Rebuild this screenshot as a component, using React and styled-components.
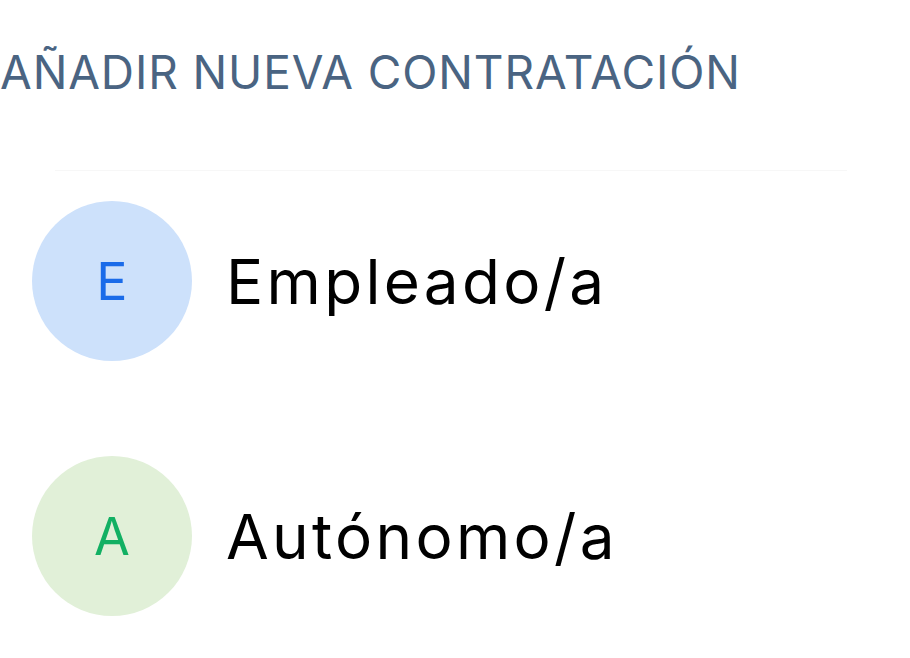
import React from "react";
import styled, { createGlobalStyle } from "styled-components";

const GlobalStyle = createGlobalStyle`
  html, body {
    margin: 0;
    padding: 0;
    background: #ffffff;
  }
  body {
    font-family: "Inter", "Noto Sans", sans-serif;
  }
`;

const Page = styled.div`
  width: 910px;
  height: 658px;
  overflow: hidden;
  display: flex;
  flex-direction: column;
`;

const Title = styled.h1`
  margin: 0;
  padding-top: 44px;
  font-size: 46px;
  font-weight: 400;
  line-height: 56px;
  letter-spacing: 0.9px;
  color: #4a6482;
  white-space: nowrap;
`;

const List = styled.ul`
  list-style: none;
  margin: 70px 63px 0 55px;
  padding: 30px 0 0 0;
  border-top: 1px solid #f7f7f7;
  display: flex;
  flex-direction: column;
  gap: 95px;
`;

const Item = styled.li`
  display: flex;
  align-items: center;
  gap: 34px;
  margin-left: -23px;
`;

const Avatar = styled.div`
  width: 160px;
  height: 160px;
  border-radius: 50%;
  flex-shrink: 0;
  display: flex;
  align-items: center;
  justify-content: center;
  background: ${(props) => props.bg};
  color: ${(props) => props.fg};
  font-size: 52px;
  font-weight: 400;
`;

const Label = styled.span`
  font-size: 62px;
  font-weight: 400;
  letter-spacing: 3.3px;
  color: #000000;
`;

const options = [
  { letter: "E", label: "Empleado/a", bg: "#cde1fb", fg: "#1a6be9" },
  { letter: "A", label: "Autónomo/a", bg: "#e1f0d8", fg: "#12b063" },
];

export default function App() {
  return (
    <Page>
      <GlobalStyle />
      <Title>AÑADIR NUEVA CONTRATACIÓN</Title>
      <List>
        {options.map((o) => (
          <Item key={o.letter}>
            <Avatar bg={o.bg} fg={o.fg}>
              {o.letter}
            </Avatar>
            <Label>{o.label}</Label>
          </Item>
        ))}
      </List>
    </Page>
  );
}
